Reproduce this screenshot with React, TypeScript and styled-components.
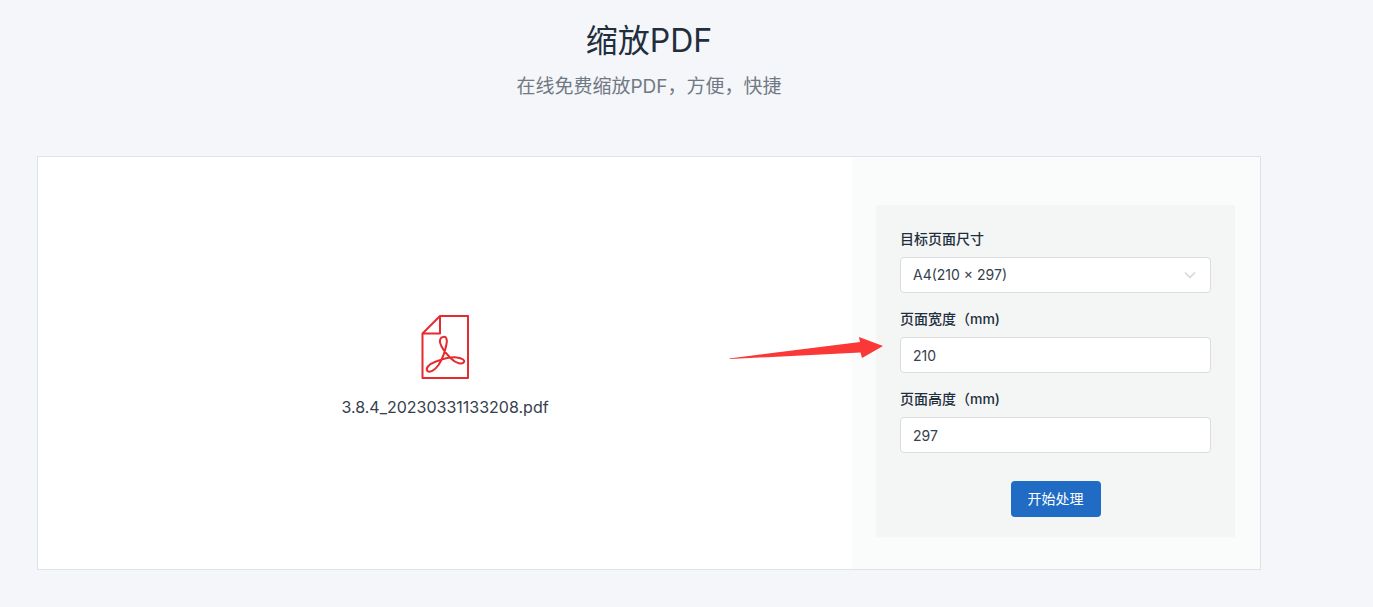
import React, { useState } from "react";
import styled, { createGlobalStyle } from "styled-components";

const GlobalStyle = createGlobalStyle`
  *, *::before, *::after { box-sizing: border-box; }
  body {
    margin: 0;
    background: #f4f6fa;
    color: #232e3c;
    font-family: Inter, "Noto Sans CJK SC", sans-serif;
    font-size: 14px;
    line-height: 20px;
  }
`;

const Page = styled.main`
  padding: 21px 112px 36px 37px;
`;

const Header = styled.header`
  text-align: center;
  margin-bottom: 55px;
`;

const Title = styled.h1`
  margin: 0 0 12px;
  font-size: 32px;
  line-height: 40px;
  font-weight: 400;
`;

const Subtitle = styled.p`
  margin: 0;
  font-size: 19px;
  line-height: 28px;
  font-weight: 400;
  color: #717983;
`;

const Card = styled.section`
  display: grid;
  grid-template-columns: 2fr minmax(408px, 1fr);
  background: #fff;
  border: 1px solid #dfe3e8;
`;

const Preview = styled.div`
  display: flex;
  flex-direction: column;
  align-items: center;
  justify-content: center;
  gap: 8px;
`;

const FileName = styled.span`
  font-size: 16px;
  line-height: 24px;
  color: #36404d;
`;

const Side = styled.aside`
  position: relative;
  padding: 48px 25px 32px 24px;
  background: #fafcfb;
`;

const Pointer = styled.svg`
  position: absolute;
  top: 179px;
  right: calc(100% - 32px);
  pointer-events: none;
`;

const Panel = styled.form`
  display: flex;
  flex-direction: column;
  gap: 16px;
  padding: 24px 24px 20px;
  background: #f4f6f6;
`;

const Field = styled.div`
  display: flex;
  flex-direction: column;
  gap: 8px;
`;

const Label = styled.label`
  font-weight: 500;
`;

const SelectWrap = styled.div`
  position: relative;
  display: flex;
`;

const Chevron = styled.svg`
  position: absolute;
  top: 12px;
  right: 15px;
  pointer-events: none;
`;

const Input = styled.input`
  width: 100%;
  height: 36px;
  padding: 0 12px;
  border: 1px solid #dadcde;
  border-radius: 4px;
  background: #fff;
  color: #36404d;
  font: inherit;
  appearance: none;
  outline: none;
  &:focus { border-color: #90b5e2; }
`;

const Submit = styled.button`
  align-self: center;
  height: 36px;
  margin-top: 12px;
  padding: 0 17px;
  border: 0;
  border-radius: 4px;
  background: #206bc4;
  color: #fff;
  font: inherit;
  cursor: pointer;
`;

const PdfIcon = () => (
  <svg width="80" height="80" viewBox="0 0 80 80" fill="none" stroke="#e62a2e" strokeWidth="2" aria-hidden="true">
    <path d="M35 9H63V71H17.500V26.500L35 9V26.500H17.500" strokeLinejoin="round" />
    <path d="M38 30C41.500 29 42.500 33 41.500 37C40 45 37.500 52 33.500 58C30 63 25 66 22.500 64C20 61.500 24 57 31 54.500C39 51.500 46 49.500 52 50.500C57 51.200 60 53 59 55C57.500 58 51 56.500 46 51.500C41 46.500 36.500 41 35.200 36C34.400 32.500 35.500 30.500 38 30Z" />
  </svg>
);

interface NumberFieldProps {
  id: string;
  label: string;
  value: string;
  onChange: (value: string) => void;
}

const NumberField = ({ id, label, value, onChange }: NumberFieldProps) => (
  <Field>
    <Label htmlFor={id}>{label}</Label>
    <Input id={id} inputMode="numeric" value={value} onChange={(e) => onChange(e.target.value)} />
  </Field>
);

export default function App() {
  const [width, setWidth] = useState("210");
  const [height, setHeight] = useState("297");

  return (
    <>
      <GlobalStyle />
      <Page>
        <Header>
          <Title>缩放PDF</Title>
          <Subtitle>在线免费缩放PDF，方便，快捷</Subtitle>
        </Header>
        <Card>
          <Preview>
            <PdfIcon />
            <FileName>3.8.4_20230331133208.pdf</FileName>
          </Preview>
          <Side>
            <Panel onSubmit={(e) => e.preventDefault()}>
              <Field>
                <Label htmlFor="size">目标页面尺寸</Label>
                <SelectWrap>
                  <Input as="select" id="size" defaultValue="a4">
                    <option value="a4">A4(210 × 297)</option>
                  </Input>
                  <Chevron width="12" height="12" viewBox="0 0 12 12" fill="none" stroke="#d3d5d8" strokeWidth="1.5" aria-hidden="true">
                    <path d="M1 3.500L6 8.500L11 3.500" />
                  </Chevron>
                </SelectWrap>
              </Field>
              <NumberField id="width" label="页面宽度（mm)" value={width} onChange={setWidth} />
              <NumberField id="height" label="页面高度（mm)" value={height} onChange={setHeight} />
              <Submit type="submit">开始处理</Submit>
            </Panel>
            <Pointer width="156" height="24" viewBox="0 0 156 24" aria-hidden="true">
              <path d="M1 22.500L132 6L131 1L155 10L134 22L132.500 16.500L2 23Z" fill="#fb3838" />
            </Pointer>
          </Side>
        </Card>
      </Page>
    </>
  );
}
